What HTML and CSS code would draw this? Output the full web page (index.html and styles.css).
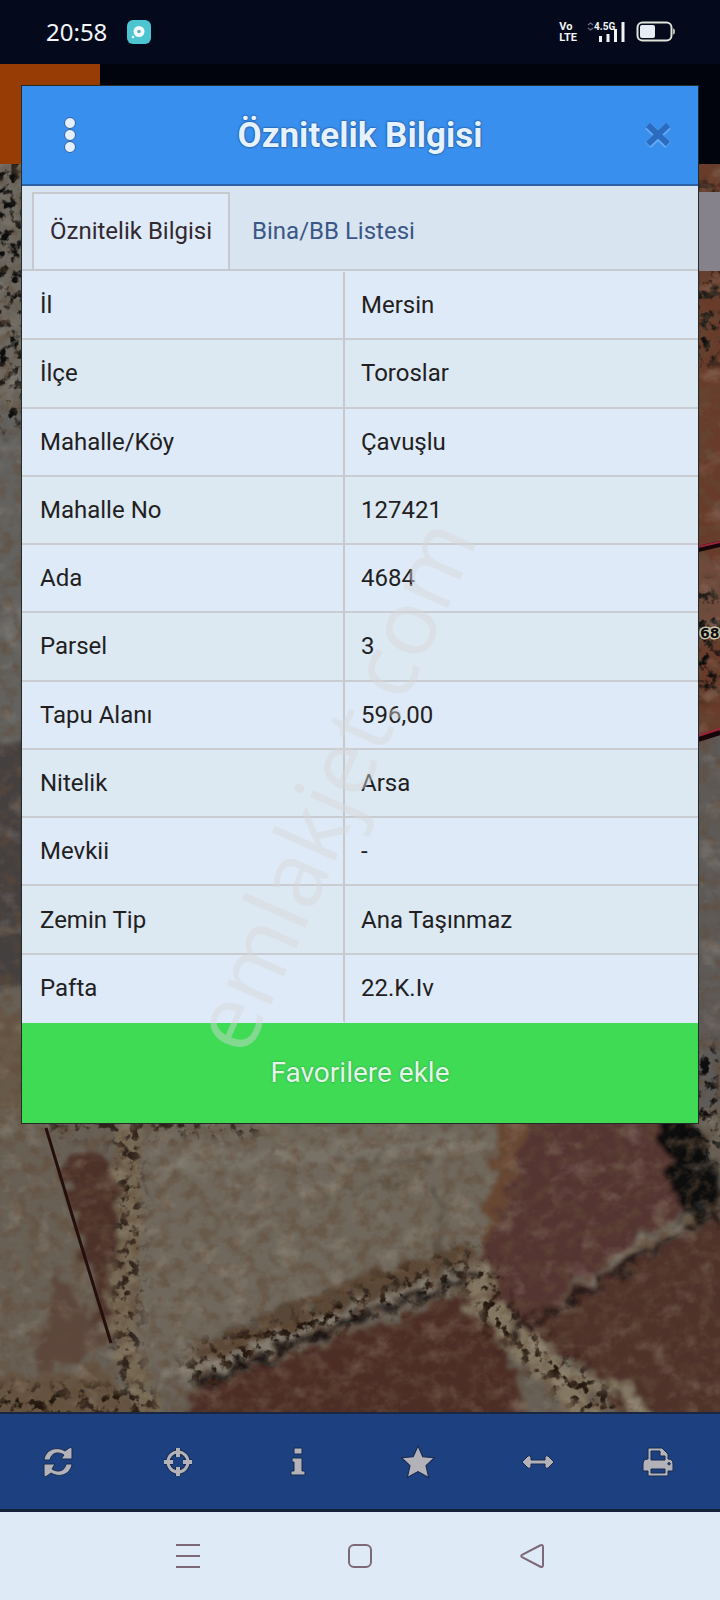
FILE: index.html
```html
<!DOCTYPE html>
<html lang="tr">
<head>
<meta charset="utf-8">
<meta name="viewport" content="width=device-width, initial-scale=1">
<title>Öznitelik Bilgisi</title>
<link rel="stylesheet" href="styles.css">
</head>
<body>
<div class="screen">
  <header class="status">
    <span class="clock">20:58</span>
    <svg class="app-badge" width="24" height="24" viewBox="0 0 24 24" aria-hidden="true"><rect width="24" height="24" rx="6" fill="#4cc5d0"/><circle cx="12" cy="11.500" r="5.500" fill="#f2fbff"/><circle cx="12" cy="11.500" r="1.800" fill="#6aa9c0"/><circle cx="6" cy="17" r="1.300" fill="#dff"/></svg>
    <span class="volte"><span>Vo</span><span>LTE</span></span>
    <span class="signal">
      <svg width="38" height="22" viewBox="0 0 38 22" aria-hidden="true"><path d="M1 4l2.500-2L6 4M1 7l2.500 2L6 7" fill="none" stroke="#68757b" stroke-width="1.200"/><path d="M12 15h3v6h-3zM19.500 13h3v8h-3zM27 8h3v13h-3zM34.500 1h3v20h-3z" fill="#f1f3f5"/></svg>
      <span class="network">4.5G</span>
    </span>
    <svg class="battery" width="40" height="22" viewBox="0 0 40 22" aria-hidden="true"><rect x="1.500" y="1.500" width="34" height="18" rx="5" fill="none" stroke="#dfe3da" stroke-width="2"/><rect x="4" y="4" width="15" height="13" rx="2" fill="#e8eaf4"/><path d="M37 7.500q2 0 2 3t-2 3z" fill="#b9beb5"/></svg>
  </header>

  <main class="app">
    <svg class="map" viewBox="0 64 720 1348" preserveAspectRatio="xMidYMid slice" aria-hidden="true">
      <defs>
        <filter id="rough" filterUnits="userSpaceOnUse" x="-20" y="64" width="760" height="1370">
          <feTurbulence type="fractalNoise" baseFrequency="0.06" numOctaves="4" seed="4" result="n"/>
          <feDisplacementMap in="SourceGraphic" in2="n" scale="30" xChannelSelector="R" yChannelSelector="G"/>
          <feGaussianBlur stdDeviation="2"/>
        </filter>
        <filter id="grain" x="0" y="0" width="100%" height="100%">
          <feTurbulence type="fractalNoise" baseFrequency="0.07 0.08" numOctaves="4" seed="9"/>
          <feColorMatrix values="0 0 0 0 0.12  0 0 0 0 0.07  0 0 0 0 0.04  3 0 0 0 -1.300"/>
        </filter>
        <filter id="light" x="0" y="0" width="100%" height="100%">
          <feTurbulence type="fractalNoise" baseFrequency="0.04 0.05" numOctaves="4" seed="33"/>
          <feColorMatrix values="0 0 0 0 0.62  0 0 0 0 0.55  0 0 0 0 0.46  0 3 0 0 -1.600"/>
        </filter>
        <filter id="speck" filterUnits="userSpaceOnUse" x="-20" y="64" width="760" height="1370">
          <feGaussianBlur in="SourceGraphic" stdDeviation="7" result="s"/>
          <feTurbulence type="fractalNoise" baseFrequency="0.1" numOctaves="3" seed="21" result="n"/>
          <feColorMatrix in="n" values="0 0 0 0 0  0 0 0 0 0  0 0 0 0 0  0 7 0 0 -3.600" result="m"/>
          <feComposite in="s" in2="m" operator="in"/>
        </filter>
      </defs>
      <rect y="64" width="720" height="1348" fill="#686056"/>
      <g filter="url(#rough)">
        <path d="M-30 150h70v250h-70z" fill="#6c6860"/>
        <path d="M-30 400h70v340h-70z" fill="#64625f"/>
        <path d="M-30 740h70v250h-70z" fill="#454140"/>
        <path d="M-30 1010h70v130h-70z" fill="#675a49"/>
        <path d="M680 150h70v590h-70z" fill="#673a2c"/>
        <path d="M680 560h70v80h-70z" fill="#704b3d"/>
        <path d="M680 735h70v370h-70z" fill="#5d5a59"/>
        <path d="M-20 1110h70L110 1330 40 1372-20 1385z" fill="#696155"/>
        <path d="M55 1270l57 70-72 35z" fill="#5d473c"/>
        <path d="M62 1165q28-20 55 0l8 110-25 55z" fill="#4d3029"/>
        <path d="M135 1125h365l10 60-25 60-20 25-230 50-95 60-20-90 20-80z" fill="#6f685b"/>
        <path d="M150 1160l300-25 40 10-300 30z" fill="#777166"/>
        <path d="M500 1110h50l-25 120-45 40 10-75z" fill="#674731"/>
        <path d="M540 1100h150l-10 110-180 130-20-70z" fill="#553530"/>
        <path d="M490 1340l250-145v240h-110l-30-60-90-50z" fill="#4f302a"/>
        <path d="M200 1385l280-95 60 150H170z" fill="#4d2e26"/>
        <path d="M-20 1385l120-20 60 70H-20z" fill="#665542"/>
        <path d="M125 1120q10 120 0 150t0 80l30 80" fill="none" stroke="#776a55" stroke-width="22"/>
        <path d="M200 1360l140-65 135-40" fill="none" stroke="#5c4635" stroke-width="24"/>
        <path d="M160 1375q110-20 170-55l150-55" fill="none" stroke="#837b70" stroke-width="10"/>
        <path d="M475 1260l10 50 60 55 45 60" fill="none" stroke="#837762" stroke-width="28"/>
        <path d="M545 1370l80 20 25 45" fill="none" stroke="#827763" stroke-width="18"/>
        <path d="M615 1265l125-65" fill="none" stroke="#76695a" stroke-width="12"/>
        <path d="M655 1115h40l25 60v50l-40-10z" fill="#0b0909"/>
      </g>
      <g filter="url(#speck)" fill="none" stroke-linecap="round">
        <path d="M5 160v250" stroke="#090807" stroke-width="46"/>
        <path d="M128 1130v240M60 1122h190" stroke="#2b1e12" stroke-width="26"/>
        <path d="M200 1365l270-100" stroke="#241710" stroke-width="36"/>
        <path d="M480 1275l20 45 110 95M10 1405h130" stroke="#20180d" stroke-width="36"/>
        <path d="M705 200v150M705 600v80M705 1060v90" stroke="#100a08" stroke-width="34"/>
      </g>
      <g fill="none" stroke-linecap="round" filter="url(#rough)">
        <path d="M500 1340l235-138" stroke="#231412" stroke-width="6"/>
        <path d="M200 1384l140-58 135-52" stroke="#120c0c" stroke-width="7"/>
        <path d="M330 1195l80-18M340 1158h90M440 1190v100M230 1330l260-70" stroke="#51483d" stroke-width="3"/>
      </g>
      <rect y="164" width="720" height="1248" filter="url(#grain)" opacity=".55"/>
      <rect y="164" width="720" height="1248" filter="url(#light)" opacity=".2"/>
      <path d="M46 1128l33 110 32 105" fill="none" stroke="#240f0d" stroke-width="3"/>
      <path d="M698 549l22-5M698 739l22-7" stroke="#16060a" stroke-width="6"/>
      <path d="M698 547l22-5M698 736l22-7" stroke="#9b233b" stroke-width="2"/>
      <rect x="690" y="192" width="30" height="79" fill="#85828b"/>
      <text class="parcel-no" x="700" y="638">68</text>
    </svg>
    <div class="app-bar"></div>

    <section class="dialog" role="dialog" aria-labelledby="dialog-title">
      <header class="dialog-head">
        <button class="head-btn menu" type="button" aria-label="Menü"><svg width="14" height="38" viewBox="0 0 14 38"><g fill="#e4effc" stroke="#2b62a4" stroke-width="1"><circle cx="7" cy="7" r="5.500"/><circle cx="7" cy="19" r="5.500"/><circle cx="7" cy="31" r="5.500"/></g></svg></button>
        <h1 class="title" id="dialog-title">Öznitelik Bilgisi</h1>
        <button class="head-btn close" type="button" aria-label="Kapat"><svg width="28" height="28" viewBox="0 0 28 28"><path d="M4 5l20 19M24 5L4 24" stroke="#69adf2" stroke-width="8"/><path d="M4 4l20 19M24 4L4 23" stroke="#2b6cc2" stroke-width="6"/></svg></button>
      </header>
      <nav class="tabs">
        <a class="tab active" href="#oznitelik">Öznitelik Bilgisi</a>
        <a class="tab" href="#bina">Bina/BB Listesi</a>
      </nav>
      <table class="attrs" id="oznitelik">
        <tbody>
          <tr><th scope="row">İl</th><td>Mersin</td></tr>
          <tr><th scope="row">İlçe</th><td>Toroslar</td></tr>
          <tr><th scope="row">Mahalle/Köy</th><td>Çavuşlu</td></tr>
          <tr><th scope="row">Mahalle No</th><td>127421</td></tr>
          <tr><th scope="row">Ada</th><td>4684</td></tr>
          <tr><th scope="row">Parsel</th><td>3</td></tr>
          <tr><th scope="row">Tapu Alanı</th><td>596,00</td></tr>
          <tr><th scope="row">Nitelik</th><td>Arsa</td></tr>
          <tr><th scope="row">Mevkii</th><td>-</td></tr>
          <tr><th scope="row">Zemin Tip</th><td>Ana Taşınmaz</td></tr>
          <tr><th scope="row">Pafta</th><td>22.K.Iv</td></tr>
        </tbody>
      </table>
      <button class="favorite" type="button">Favorilere ekle</button>
    </section>
  </main>

  <nav class="toolbar" aria-label="Harita araçları">
    <button type="button" aria-label="Yenile"><svg width="32" height="32" viewBox="0 0 32 32"><g class="edge"><path d="M2 14C3 5 13-1 23 5l4-3q2-1 3 0v11H19l3-4C16 5 9 7 8 14z"/><path d="M30 18C29 27 19 33 9 27l-4 3q-2 1-3 0V18h11l-3 5c6 4 13 2 14-5z"/></g></svg></button>
    <button type="button" aria-label="Konum"><svg width="32" height="32" viewBox="0 0 32 32"><g fill="none"><path d="M16 2v9M16 21v9M2 16h9M21 16h9" stroke="#17294c" stroke-width="6"/><circle cx="16" cy="16" r="10" stroke="#17294c" stroke-width="5"/><circle cx="16" cy="16" r="10" stroke="#b3b2b9" stroke-width="3"/><path d="M16 2v9M16 21v9M2 16h9M21 16h9" stroke="#b3b2b9" stroke-width="4"/></g></svg></button>
    <button type="button" aria-label="Bilgi"><svg width="32" height="32" viewBox="0 0 32 32"><path class="edge" d="M12 2h8v6h-8zM10 12h10v13h3v4H9v-4h3v-9h-2z"/></svg></button>
    <button type="button" aria-label="Favoriler"><svg width="34" height="34" viewBox="0 0 32 32"><path class="edge" d="M16 1l4.500 10 11 1-8 7.500 2.500 11L16 25 6 30.500l2.500-11-8-7.500 11-1z"/></svg></button>
    <button type="button" aria-label="Ölçüm"><svg width="34" height="32" viewBox="0 0 34 32"><path class="edge" d="M1 16l6-6q2-1 3 1v3h14v-3q1-2 3-1l6 6-6 6q-2 1-3-1v-3H10v3q-1 2-3 1z"/></svg></button>
    <button type="button" aria-label="Yazdır"><svg width="34" height="32" viewBox="0 0 34 32"><path class="edge" fill-rule="evenodd" d="M7 13V3q0-1 1-1h13l6 6v5q5 0 5 5v7h-5v4q0 1-1 1H8q-1 0-1-1v-4H2v-7q0-5 5-5zM10 5v9h14v-4h-5V5zM10 23v4h14v-4zM28 16.500a1.200 1.200 0 1 0 .1 0z"/></svg></button>
  </nav>

  <nav class="system-nav" aria-label="Sistem">
    <button type="button" aria-label="Son uygulamalar"><svg width="26" height="26" viewBox="0 0 26 26"><path d="M1 2h24M1 13h24M1 24h24"/></svg></button>
    <button type="button" aria-label="Ana ekran"><svg width="26" height="26" viewBox="0 0 26 26"><rect x="2" y="2" width="22" height="22" rx="5"/></svg></button>
    <button type="button" aria-label="Geri"><svg width="26" height="26" viewBox="0 0 26 26"><path d="M21 2.500Q24 1 24 4v18q0 3-3 1.500L3.500 14.500q-2.500-1.500 0-3z"/></svg></button>
  </nav>
  <div class="watermark" aria-hidden="true">emlakjet.com</div>
</div>
</body>
</html>
```
FILE: styles.css
```css
* { box-sizing: border-box; }

body {
  margin: 0;
  font-family: Roboto, "Noto Sans", sans-serif;
  font-size: 24px;
  line-height: 32px;
  color: #221e22;
  background: #02040d;
}

button {
  padding: 0;
  border: 0;
  background: none;
  font: inherit;
  color: inherit;
}

svg { display: block; }

.screen {
  position: relative;
  display: flex;
  flex-direction: column;
  min-height: 100vh;
  overflow: hidden;
}

.status {
  display: flex;
  align-items: center;
  height: 64px;
  padding: 0 44px 0 46px;
  color: #f3f5f8;
  background: #040a1b;
}

.clock { font-family: "Noto Sans", sans-serif; font-size: 24px; }
.app-badge { margin-left: 20px; }

.volte {
  display: flex;
  flex-direction: column;
  margin-left: auto;
  margin-right: 10px;
  font-size: 11px;
  font-weight: 700;
  line-height: 11px;
}

.signal { position: relative; margin-right: 11px; }
.network {
  position: absolute;
  left: 7px;
  top: 0;
  font-size: 10px;
  font-weight: 700;
  line-height: 12px;
}

.app {
  display: grid;
  flex: 1;
  grid-template-columns: minmax(0, 1fr);
}

.app > * { grid-area: 1 / 1; }

.map {
  width: 100%;
  height: 100%;
  min-height: 0;
}

.parcel-no {
  font: 700 14px "DejaVu Sans", sans-serif;
  fill: #0d0d0d;
  stroke: #c9c6ad;
  stroke-width: 3px;
  paint-order: stroke;
}

.app-bar {
  align-self: start;
  height: 100px;
  background: linear-gradient(90deg, #963c04 100px, #02040d 100px);
}

.dialog {
  align-self: start;
  position: relative;
  margin: 22px;
  background: #deeaf7;
  box-shadow: 0 0 0 1px #222b26;
}

.dialog-head {
  display: grid;
  grid-template-columns: 1fr auto 1fr;
  align-items: center;
  height: 100px;
  border-bottom: 2px solid #2b62a4;
  background: #388fee;
}

.head-btn {
  display: grid;
  place-items: center;
  width: 48px;
  height: 64px;
}

.menu { margin-left: 24px; }
.close { justify-self: end; margin-right: 16px; }

.title {
  margin: 0;
  padding-top: 2px;
  font-size: 35px;
  font-weight: 700;
  line-height: 44px;
  color: #e6f2ff;
  text-shadow: 0 0 2px #1d4e8e, 0 0 2px #1d4e8e;
}

.tabs {
  display: flex;
  gap: 4px;
  height: 85px;
  padding: 6px 10px 0;
  border-bottom: 2px solid #c6c9ce;
  background: #d8e4ef;
}

.tab {
  display: flex;
  align-items: center;
  padding: 0 18px;
  color: #3a5788;
  text-decoration: none;
}

.tab.active {
  border: 2px solid #c6c9ce;
  border-bottom: 0;
  padding: 0 16px 2px;
  color: #33282f;
  background: #deeaf7;
}

.attrs {
  width: 100%;
  height: 752px;
  padding-top: 1px;
  border-collapse: separate;
  border-spacing: 0;
  table-layout: fixed;
}

.attrs tr:nth-child(even) { background: #dce8f2; }

.attrs th,
.attrs td {
  padding: 0 16px;
  border-bottom: 2px solid #c9ccd1;
  font-weight: 400;
  text-align: left;
}

.attrs th {
  width: 48%;
  padding-left: 18px;
  border-right: 2px solid #c6c8ce;
}

.attrs th { width: 323px; }
.attrs tr:last-child > * { border-bottom-color: transparent; }

.favorite {
  display: block;
  width: 100%;
  height: 100px;
  font-size: 28px;
  color: #e2f6e8;
  text-shadow: 0 0 2px #2a8a3c;
  background: #3fdb55;
}

.toolbar {
  display: grid;
  grid-template-columns: repeat(6, 1fr);
  height: 100px;
  border-top: 2px solid #1b2740;
  border-bottom: 3px solid #142138;
  background: #1d4080;
}

.toolbar button,
.system-nav button {
  display: grid;
  place-items: center;
}

.toolbar button { padding-right: 4px; }

.edge {
  fill: #b3b2b9;
  stroke: #17294c;
  stroke-width: 1px;
}

.system-nav {
  display: grid;
  grid-template-columns: repeat(3, 172px);
  justify-content: center;
  height: 88px;
  background: #deeaf6;
}

.system-nav svg {
  fill: none;
  stroke: #7d6878;
  stroke-width: 2px;
}

.watermark {
  position: absolute;
  left: 46%;
  top: 49%;
  font: 400 91px/92px "Open Sans", "Noto Sans", sans-serif;
  color: rgba(214, 214, 214, 0.45);
  transform: translate(-50%, -50%) rotate(-66deg);
  pointer-events: none;
}
```
